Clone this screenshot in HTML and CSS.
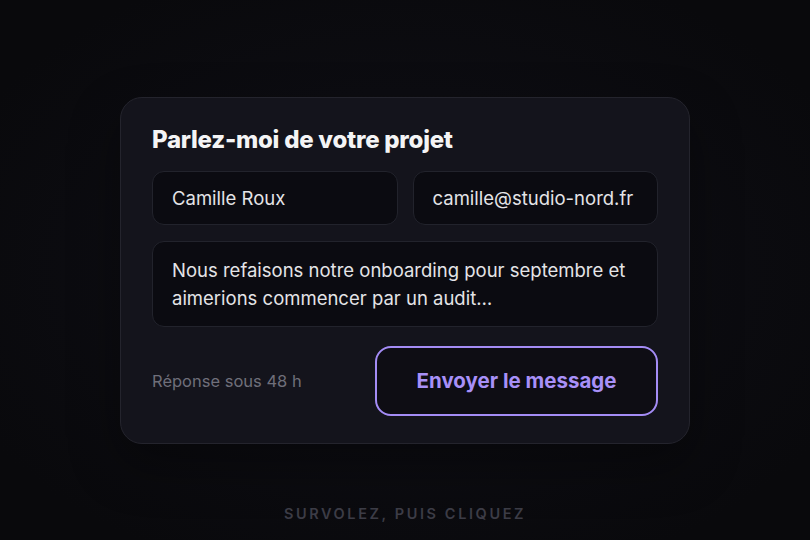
FILE: index.html
```html
<!DOCTYPE html>
<html lang="fr">
<head>
<meta charset="utf-8">
<title>Contact</title>
<link rel="stylesheet" href="styles.css">
</head>
<body>
<main class="stage">
  <div class="spacer"></div>
  <form class="card">
    <h2 class="title">Parlez-moi de votre projet</h2>
    <div class="row">
      <div class="field">Camille Roux</div>
      <div class="field">camille@studio-nord.fr</div>
    </div>
    <div class="field area">Nous refaisons notre onboarding pour septembre et aimerions commencer par un audit…</div>
    <div class="footer">
      <span class="note">Réponse sous 48 h</span>
      <button type="button" class="send">Envoyer le message</button>
    </div>
  </form>
  <div class="bottom"><p class="hint">SURVOLEZ, PUIS CLIQUEZ</p></div>
</main>
</body>
</html>
```

FILE: styles.css
```css
* { box-sizing: border-box; }
html, body { margin: 0; height: 100%; }
body {
  background: radial-gradient(ellipse 60% 60% at 50% 50%, #111118 0%, #0c0c11 55%, #09090c 100%);
  font-family: Inter, "Noto Sans", sans-serif;
  color: #e4e4e7;
}
.stage {
  height: 540px;
  display: grid;
  grid-template-rows: 1fr auto 1fr;
  justify-items: center;
}
.card {
  width: 570px;
  background: #14141c;
  border: 1px solid #24242d;
  border-radius: 22px;
  padding: 27px 31px 27px;
  display: flex;
  flex-direction: column;
  box-shadow: 0 20px 50px rgba(0,0,0,0.35);
}
.title {
  margin: 0 0 16px;
  font-size: 24px;
  line-height: 30px;
  font-weight: 800;
  color: #f4f4f5;
  letter-spacing: -0.25px;
}
.row {
  display: grid;
  grid-template-columns: 1fr 1fr;
  gap: 15px;
  margin-bottom: 16px;
}
.field {
  background: #0b0b11;
  border: 1px solid #22232c;
  border-radius: 12px;
  padding: 13px 19px;
  font-size: 18.5px;
  line-height: 26px;
  color: #e4e4e7;
  white-space: nowrap;
}
.area {
  white-space: normal;
  padding: 14px 19px;
  line-height: 28px;
  min-height: 86px;
}
.footer {
  margin-top: 19px;
  display: flex;
  align-items: center;
  justify-content: space-between;
}
.note {
  font-size: 16.5px;
  color: #6f6f7a;
}
.send {
  width: 283px;
  height: 70px;
  background: #0e0d14;
  border: 2px solid #a48cf5;
  border-radius: 16px;
  font-family: inherit;
  font-size: 20.5px;
  font-weight: 700;
  color: #a890f8;
  cursor: pointer;
}
.bottom {
  display: flex;
  align-items: flex-end;
  justify-content: center;
  padding-bottom: 16px;
}
.hint {
  margin: 0;
  font-size: 14.5px;
  line-height: 20px;
  font-weight: 600;
  letter-spacing: 2.6px;
  color: #3c3c46;
}
```
